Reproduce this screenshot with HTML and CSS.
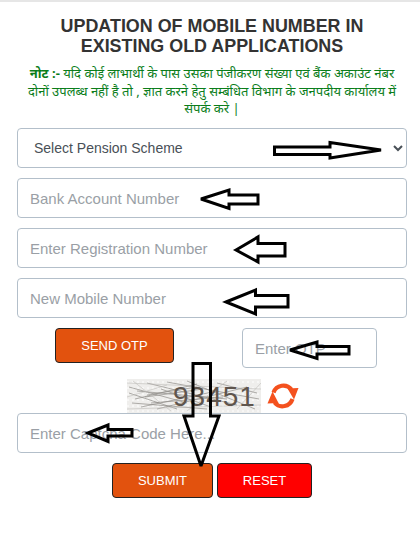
FILE: index.html
```html
<!DOCTYPE html>
<html lang="en">
<head>
<meta charset="utf-8">
<title>Updation of Mobile Number</title>
<link rel="stylesheet" href="styles.css">
</head>
<body>
<main class="page">
  <h1 class="title">UPDATION OF MOBILE NUMBER IN<br>EXISTING OLD APPLICATIONS</h1>
  <p class="note"><b>नोट :-</b> यदि कोई लाभार्थी के पास उसका पंजीकरण संख्या एवं बैंक अकाउंट नंबर दोनों उपलब्ध नहीं है तो , ज्ञात करने हेतु सम्बंधित विभाग के जनपदीय कार्यालय में संपर्क करे |</p>
  <form class="form">
    <select class="field select"><option>Select Pension Scheme</option></select>
    <input class="field" placeholder="Bank Account Number">
    <input class="field" placeholder="Enter Registration Number">
    <input class="field" placeholder="New Mobile Number">
    <div class="otp-row">
      <button type="button" class="btn btn-orange btn-otp">SEND OTP</button>
      <input class="field otp" placeholder="Enter OTP">
    </div>
    <div class="captcha-row">
      <div class="captcha">
        <svg class="captcha-noise" viewBox="0 0 134 34" aria-hidden="true">
          <rect width="134" height="34" fill="#efeeec"/>
          <g stroke="#fff" stroke-width="1" stroke-dasharray="2 3" fill="none">
            <path d="M0 3H134M0 9H134M0 15H134M0 21H134M0 27H134M0 32H134"/>
          </g>
          <g stroke="#8f8c88" stroke-width=".7" fill="none">
            <path d="M2 8 60 24M8 20 70 5M14 28 90 12M20 4 110 26M30 30 120 8M2 14 50 30M40 3 132 20M5 24 80 30M60 2 128 30M70 8 20 16M90 4 130 14M10 12 100 20M18 18 76 10M24 24 96 18M34 10 84 28"/>
          </g>
          <g stroke="#c0bebb" stroke-width=".6" fill="none">
            <path d="M0 4 134 10M0 30 134 26M6 2 44 32M100 2 60 32M110 30 134 4M0 18 40 6"/>
          </g>
        </svg>
        <span class="captcha-code">93451</span>
      </div>
      <svg class="refresh" viewBox="0 0 32 32" aria-hidden="true">
        <path d="M6.500 12.500A10.500 10.500 0 0 1 24.500 9.500" fill="none" stroke="#f4511e" stroke-width="4.200"/>
        <path d="M20.500 8.500 31.500 8 27 19.500Z" fill="#f4511e"/>
        <path d="M25.500 19A10.500 10.500 0 0 1 7.500 22.500" fill="none" stroke="#f4511e" stroke-width="4.200"/>
        <path d="M.5 23.500 11.500 23 5.500 11.500Z" fill="#f4511e"/>
      </svg>
    </div>
    <input class="field" placeholder="Enter Captcha Code Here...">
    <div class="actions">
      <button type="button" class="btn btn-orange btn-submit">SUBMIT</button>
      <button type="button" class="btn btn-red">RESET</button>
    </div>
  </form>
</main>
<svg class="arrows" viewBox="0 0 420 533" aria-hidden="true">
  <g fill="none" stroke="#000" stroke-width="3" stroke-linejoin="miter" stroke-miterlimit="3">
    <path d="M274.500 147H330V142.500L381 150 330 158V154.500H274.500Z"/>
    <path d="M201 199 229 190V195H258V204H229V208.500Z"/>
    <path d="M236 250 258 237V243.500H285V256H258V262Z"/>
    <path d="M226 302 255.500 290V295.500H288V307H255.500V314Z"/>
    <path d="M290 350 317 342V346.500H349V354H317V358.500Z"/>
    <path d="M88 433 108 425V429.500H132V436H108V441.500Z"/>
    <path d="M193 416V363.500H210.500V416H219L201 466 184 416Z"/>
  </g>
</svg>
</body>
</html>
```
FILE: styles.css
```css
* { box-sizing: border-box; }
html, body { margin: 0; padding: 0; background: #fff; }
body {
  width: 420px;
  height: 533px;
  overflow: hidden;
  position: relative;
  border-top: 2px solid #e6e6e6;
  font-family: "Liberation Sans", Arial, sans-serif;
}
.page { padding: 14px 13px 0 17px; }
.title {
  margin: 0;
  text-align: center;
  font-size: 17.9px;
  line-height: 20px;
  font-weight: 700;
  color: #333;
}
.note {
  margin: 9px 0 0;
  padding: 0 2px;
  height: 63px;
  text-align: center;
  font-size: 13px;
  line-height: 17.6px;
  color: #0a7d1a;
  font-family: "Noto Sans", "Liberation Sans", sans-serif;
}
.form { display: flex; flex-direction: column; gap: 10px; }
.field {
  display: block;
  width: 100%;
  height: 40px;
  padding: 6px 12px;
  border: 1px solid #b3bfca;
  border-radius: 4px;
  background: #fff;
  color: #495057;
  font: 15px "Liberation Sans", Arial, sans-serif;
}
.field::placeholder { color: #9a9fa6; opacity: 1; }
.select { font-size: 14px; }
.otp-row { display: flex; align-items: flex-start; padding-left: 38px; }
.btn {
  display: block;
  border: 1px solid #222;
  border-radius: 4px;
  color: #fff;
  font: 13px "Liberation Sans", Arial, sans-serif;
  padding: 0;
}
.btn-orange { background: #e2520e; }
.btn-red { background: #ff0000; width: 95px; height: 35px; }
.btn-otp { width: 119px; height: 35px; }
.otp { width: 135px; margin-left: 68px; }
.captcha-row { display: flex; align-items: center; height: 35px; margin-bottom: -10px; padding-left: 110px; }
.captcha { position: relative; width: 134px; height: 34px; }
.captcha-noise { display: block; width: 134px; height: 34px; }
.captcha-code {
  position: absolute;
  top: 0;
  left: 46px;
  font: 28px/36px "Liberation Sans", sans-serif;
  letter-spacing: 1px;
  color: #5f554d;
}
.refresh { width: 32px; height: 32px; margin-left: 6px; }
.actions { display: flex; gap: 4px; padding-left: 95px; }
.btn-submit { width: 101px; height: 35px; }
.arrows { position: absolute; left: 0; top: -2px; width: 420px; height: 533px; pointer-events: none; }
```
